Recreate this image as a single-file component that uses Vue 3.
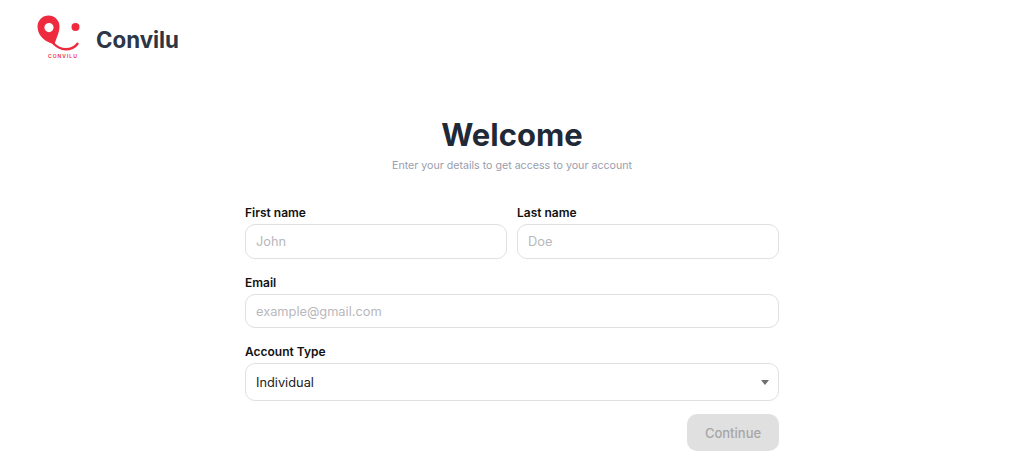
<script setup>
const accountTypes = ['Individual', 'Business']
</script>

<template>
  <div class="page">
    <header class="header">
      <svg class="logo" width="44" height="48" viewBox="36 13 44 48" aria-hidden="true">
        <path d="M48.500 14.500a11 11 0 0 1 11 11c0 6-3 11-5 18C47 41.500 37.500 36 37.500 25.500a11 11 0 0 1 11-11Zm.5 7.500a4.600 4.600 0 1 0 0 9.200 4.600 4.600 0 0 0 0-9.200Z" fill="#ee2a3f" fill-rule="evenodd"/>
        <circle cx="75.500" cy="26" r="4" fill="#ee2a3f"/>
        <path d="M53.500 42.500c4 4 8 5.700 12 5.700 5 0 9.500-2 12-5.500" fill="none" stroke="#ee2a3f" stroke-width="2.400" stroke-linecap="round"/>
      </svg>
      <span class="logo-mini">CONVILU</span>
      <span class="brand">Convilu</span>
    </header>

    <main class="main">
      <h1 class="title">Welcome</h1>
      <p class="subtitle">Enter your details to get access to your account</p>

      <form class="form" @submit.prevent>
        <div class="row">
          <label class="field">
            <span class="label">First name</span>
            <input class="input" type="text" placeholder="John" />
          </label>
          <label class="field">
            <span class="label">Last name</span>
            <input class="input" type="text" placeholder="Doe" />
          </label>
        </div>
        <label class="field">
          <span class="label">Email</span>
          <input class="input input-email" type="email" placeholder="example@gmail.com" />
        </label>
        <label class="field">
          <span class="label">Account Type</span>
          <span class="select-wrap">
            <select class="select">
              <option v-for="t in accountTypes" :key="t">{{ t }}</option>
            </select>
            <span class="caret"></span>
          </span>
        </label>
        <div class="actions">
          <button class="button" type="button" disabled>Continue</button>
        </div>
      </form>
    </main>
  </div>
</template>

<style>
html, body { margin: 0; background: #fff; }
</style>

<style scoped>
.page {
  width: 1024px;
  height: 468px;
  overflow: hidden;
  font-family: Inter, "Noto Sans", sans-serif;
  background: #fff;
}
.header {
  position: relative;
  display: flex;
  align-items: center;
  gap: 16px;
  padding: 13px 0 0 36px;
  height: 49px;
}
.logo { display: block; flex: none; }
.logo-mini {
  position: absolute;
  left: 48px;
  top: 53px;
  font-size: 5px;
  line-height: 6px;
  font-weight: 600;
  letter-spacing: 1px;
  color: #ee2a3f;
}
.brand {
  font-size: 22.300px;
  font-weight: 700;
  color: #2c3646;
  position: relative;
  top: 2px;
}
.main {
  display: flex;
  flex-direction: column;
  align-items: center;
  padding-top: 53px;
}
.title {
  margin: 0;
  font-size: 31px;
  line-height: 40px;
  font-weight: 700;
  color: #1f2937;
}
.subtitle {
  margin: 2px 0 0;
  font-size: 10.650px;
  line-height: 18px;
  color: #9a9dad;
}
.form {
  width: 534px;
  margin-top: 29px;
  display: flex;
  flex-direction: column;
  gap: 15px;
}
.row {
  display: flex;
  gap: 10px;
}
.row .field:first-child { width: 262px; flex: none; }
.row .field:last-child { flex: 1; }
.field {
  display: flex;
  flex-direction: column;
  gap: 3px;
}
.label {
  font-size: 12px;
  line-height: 17px;
  font-weight: 600;
  color: #111;
}
.input, .select {
  box-sizing: border-box;
  width: 100%;
  border: 1px solid #e0e0e3;
  border-radius: 10px;
  background: #fff;
  font-family: inherit;
  font-size: 12.800px;
  padding: 0 10px;
  outline: none;
  color: #222;
}
.input { height: 35px; }
.input-email { height: 34px; }
.input::placeholder { color: #b8b8bc; opacity: 1; }
.select-wrap { position: relative; display: block; }
.select {
  height: 38px;
  appearance: none;
  display: block;
}
.caret {
  position: absolute;
  right: 10px;
  top: 17px;
  width: 0;
  height: 0;
  border-left: 4.500px solid transparent;
  border-right: 4.500px solid transparent;
  border-top: 5px solid #6f6f73;
}
.actions {
  display: flex;
  justify-content: flex-end;
  margin-top: -2px;
}
.button {
  width: 92px;
  height: 37px;
  border: none;
  border-radius: 10px;
  background: #e0e0e0;
  color: #a6a6a6;
  font-family: inherit;
  font-size: 13px;
  font-weight: 500;
}
</style>
